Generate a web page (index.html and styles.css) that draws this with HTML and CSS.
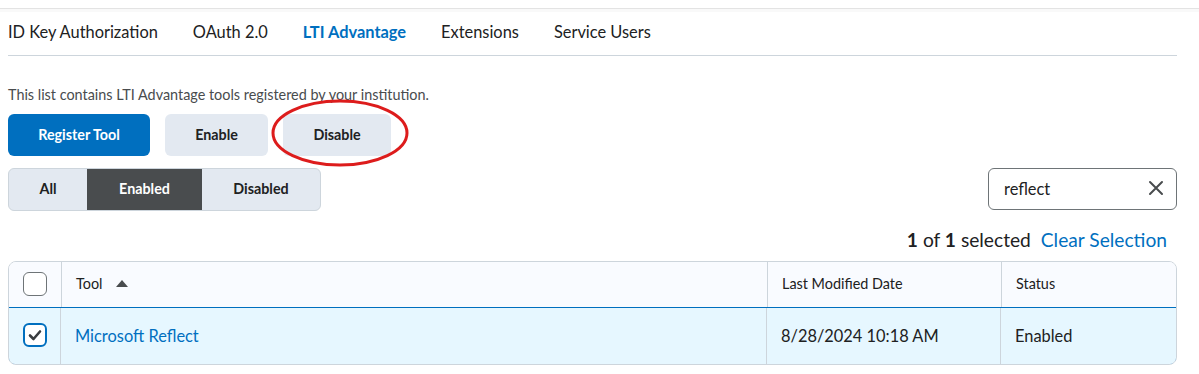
FILE: index.html
```html
<!DOCTYPE html>
<html>
<head>
<meta charset="utf-8">
<link rel="stylesheet" href="styles.css">
</head>
<body>
<div class="topline"></div>
<nav class="tabs">
  <span class="tab">ID Key Authorization</span>
  <span class="tab">OAuth 2.0</span>
  <span class="tab active">LTI Advantage</span>
  <span class="tab">Extensions</span>
  <span class="tab">Service Users</span>
</nav>
<main class="content">
  <p class="desc">This list contains LTI Advantage tools registered by your institution.</p>
  <div class="actions">
    <button class="btn primary">Register Tool</button>
    <button class="btn secondary enable">Enable</button>
    <div class="circled">
      <button class="btn secondary disable">Disable</button>
      <svg class="ring" width="142" height="70" viewBox="0 0 142 70"><ellipse cx="69" cy="34" rx="67" ry="32" fill="none" stroke="#dd1c1c" stroke-width="3"/></svg>
    </div>
  </div>
  <div class="filterrow">
    <div class="seg">
      <span class="segbtn all">All</span>
      <span class="segbtn on">Enabled</span>
      <span class="segbtn dis">Disabled</span>
    </div>
    <div class="search">
      <span class="q">reflect</span>
      <svg class="x" width="16" height="16" viewBox="0 0 16 16"><path d="M2 2 L14 14 M14 2 L2 14" stroke="#494c4e" stroke-width="2" stroke-linecap="round"/></svg>
    </div>
  </div>
  <div class="selinfo"><b>1</b> of <b>1</b> selected <a class="clear">Clear Selection</a></div>
  <div class="table">
    <div class="row head">
      <div class="cell c1"><span class="cb"></span></div>
      <div class="cell c2">Tool <svg class="sort" width="12" height="7" viewBox="0 0 12 7"><path d="M0 7 L6 0 L12 7 Z" fill="#494c4e"/></svg></div>
      <div class="cell c3">Last Modified Date</div>
      <div class="cell c4">Status</div>
    </div>
    <div class="row sel">
      <div class="cell c1"><span class="cb checked"><svg width="14" height="12" viewBox="0 0 14 12"><path d="M2 6.5 L5.5 10 L12 2.5" fill="none" stroke="#3a3d40" stroke-width="2.6" stroke-linecap="round" stroke-linejoin="round"/></svg></span></div>
      <div class="cell c2"><a class="link">Microsoft Reflect</a></div>
      <div class="cell c3">8/28/2024 10:18 AM</div>
      <div class="cell c4">Enabled</div>
    </div>
  </div>
</main>
</body>
</html>
```

FILE: styles.css
```css
* { box-sizing: border-box; }
html, body { margin: 0; padding: 0; background: #fff; }
body { font-family: Lato, "Noto Sans", sans-serif; color: #202122; width: 1199px; height: 374px; overflow: hidden; }

.topline { margin-top: 8px; height: 4px; border-top: 1px solid #e3e3e3; background: #f9f9f9; }

.tabs { display: flex; gap: 35px; margin: 0 22px 0 8px; height: 44px; align-items: center; border-bottom: 1px solid #cdd5dc; padding-bottom: 4px; }
.tab { font-size: 16.4px; color: #202122; white-space: nowrap; }
.tab.active { color: #006fbf; font-weight: 700; }

.content { padding: 0 22px 0 8px; }
.desc { margin: 30px 0 0; font-size: 14.4px; color: #494c4e; line-height: 17px; }

.actions { display: flex; gap: 15px; margin-top: 11px; align-items: center; }
.btn { font-family: Lato, "Noto Sans", sans-serif; font-size: 14.3px; font-weight: 700; height: 42px; border: none; border-radius: 6px; padding: 0 0 2px; cursor: pointer; }
.primary { background: #006fbf; color: #fff; width: 142px; }
.secondary { background: #e3e9f1; color: #202122; }
.enable { width: 103px; }
.disable { width: 108px; }
.circled { position: relative; }
.ring { position: absolute; left: -12px; top: -15px; pointer-events: none; }

.filterrow { display: flex; justify-content: space-between; align-items: flex-start; margin-top: 12px; }
.seg { display: flex; height: 43px; border: 1px solid #cdd5dc; border-radius: 6px; overflow: hidden; background: #e3e9f1; }
.segbtn { display: flex; align-items: center; justify-content: center; font-size: 14.3px; font-weight: 700; color: #202122; padding-bottom: 2px; }
.segbtn.all { width: 78px; }
.segbtn.on { width: 115px; background: #494c4e; color: #fff; }
.segbtn.dis { width: 118px; }

.search { width: 189px; height: 42px; border: 1px solid #6e7477; border-radius: 6px; display: flex; align-items: center; justify-content: space-between; padding: 0 12px 2px 15px; }
.q { font-size: 16.4px; color: #202122; }

.selinfo { text-align: right; font-size: 19.2px; color: #202122; margin-top: 17px; margin-right: 10px; line-height: 24px; }
.selinfo b { font-weight: 700; }
.clear { color: #006fbf; margin-left: 5px; }

.table { margin-top: 9px; border: 1px solid #cdd5dc; border-radius: 8px; overflow: hidden; }
.row { display: flex; }
.row.head { height: 45px; background: #f9fbff; }
.row.sel { height: 58px; background: #e6f7ff; border: 1px solid #006fbf; border-radius: 0 0 7px 7px; margin: 0 -1px -1px; }
.cell { display: flex; align-items: center; border-right: 1px solid #cdd5dc; padding-left: 14px; }
.cell:last-child { border-right: none; }
.head .cell { font-size: 14.4px; color: #202122; padding-bottom: 2px; }
.sel .cell { font-size: 16.4px; color: #202122; padding-bottom: 2px; }
.c1 { width: 53px; justify-content: center; padding-left: 0; }
.c2 { width: 706px; }
.c3 { width: 234px; }
.c4 { flex: 1; }
.sel .c1 { width: 52px; }
.sort { margin-left: 14px; }
.cb { width: 24px; height: 24px; border: 1px solid #6e7477; border-radius: 6px; background: #fff; display: flex; align-items: center; justify-content: center; }
.cb.checked { border: 2px solid #006fbf; }
.link { color: #006fbf; }
```
